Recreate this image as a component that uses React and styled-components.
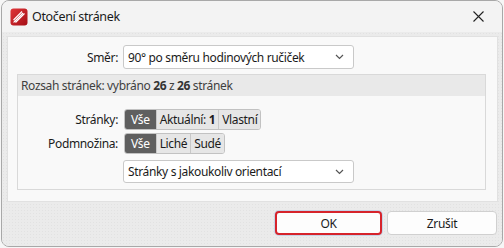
import React from "react";
import styled, { createGlobalStyle } from "styled-components";

const GlobalStyle = createGlobalStyle`
  html, body {
    margin: 0;
    padding: 0;
    background: #f6f6f6;
  }
  body {
    font-family: "Noto Sans", "Open Sans", "DejaVu Sans", sans-serif;
    font-size: 12px;
    letter-spacing: -0.35px;
    color: #1b1b1b;
  }
`;

const Chevron = () => (
  <svg width="9" height="6" viewBox="0 0 9 6">
    <path d="M1 1 L4.5 4.5 L8 1" fill="none" stroke="#555" strokeWidth="1.2" />
  </svg>
);

const AppIcon = () => (
  <svg width="18" height="18" viewBox="0 0 18 18">
    <defs>
      <linearGradient id="lg" x1="0" y1="0" x2="1" y2="1">
        <stop offset="0" stopColor="#e0363a" />
        <stop offset="1" stopColor="#a50f16" />
      </linearGradient>
    </defs>
    <rect x="0.5" y="0.5" width="17" height="17" rx="3" fill="url(#lg)" />
    <path d="M4 14 L13 5 M5.5 14.5 L14.5 5.5 M3.5 12 L12 3.5" stroke="#fff" strokeWidth="1.1" fill="none" />
    <path d="M3 15 L4.5 12.5 L5.5 13.5 Z" fill="#fff" />
  </svg>
);

const CloseIcon = () => (
  <svg width="11" height="11" viewBox="0 0 11 11">
    <path d="M0.5 0.5 L10.5 10.5 M10.5 0.5 L0.5 10.5" stroke="#222" strokeWidth="1.1" />
  </svg>
);

export default function App() {
  return (
    <>
      <GlobalStyle />
      <Window>
        <TitleBar>
          <AppIcon />
          <Title>Otočení stránek</Title>
          <CloseButton><CloseIcon /></CloseButton>
        </TitleBar>
        <Body>
          <Panel>
            <Row $label={110}>
              <Label>Směr:</Label>
              <Select>
                <span>90° po směru hodinových ručiček</span>
                <Chevron />
              </Select>
            </Row>
            <Group>
              <GroupHeader>
                Rozsah stránek: vybráno <b>26</b> z <b>26</b> stránek
              </GroupHeader>
              <GroupBody>
                <Row $label={100}>
                  <Label>Stránky:</Label>
                  <Segments>
                    <Segment $active $pad={6}>Vše</Segment>
                    <Segment>Aktuální:&nbsp;<b>1</b></Segment>
                    <Segment>Vlastní</Segment>
                  </Segments>
                </Row>
                <Row $label={100}>
                  <Label>Podmnožina:</Label>
                  <Segments>
                    <Segment $active $pad={6}>Vše</Segment>
                    <Segment>Liché</Segment>
                    <Segment>Sudé</Segment>
                  </Segments>
                </Row>
                <Row $label={100} $gapTop={3}>
                  <span />
                  <Select $height={23}>
                    <span>Stránky s jakoukoliv orientací</span>
                    <Chevron />
                  </Select>
                </Row>
              </GroupBody>
            </Group>
          </Panel>
          <Footer>
            <Button $default>OK</Button>
            <Button>Zrušit</Button>
          </Footer>
        </Body>
      </Window>
    </>
  );
}

const Window = styled.div`
  box-sizing: border-box;
  width: 502px;
  height: 247px;
  margin: 0 0 0 1px;
  border: 1px solid #a8a8a8;
  border-radius: 8px;
  overflow: hidden;
  display: flex;
  flex-direction: column;
  background: #ececec;
`;

const TitleBar = styled.div`
  height: 31px;
  display: flex;
  align-items: center;
  padding-left: 8px;
  background: #f3f3f3;
  flex-shrink: 0;
`;

const Title = styled.div`
  margin-left: 4px;
  font-size: 12.5px;
  color: #1a1a1a;
  flex: 1;
`;

const CloseButton = styled.div`
  width: 46px;
  height: 31px;
  display: flex;
  align-items: center;
  justify-content: center;
  margin-right: 1px;
`;

const Body = styled.div`
  flex: 1;
  display: flex;
  flex-direction: column;
  padding-top: 4px;
  background-color: #ebebeb;
  background-image: radial-gradient(#e2e2e2 0.6px, transparent 0.8px);
  background-size: 3px 3px;
`;

const Panel = styled.div`
  box-sizing: border-box;
  height: 166px;
  margin: 0 4px 0 5px;
  background: #f9f9f9;
  border: 1px solid #e1e1e1;
  padding: 8px 11px 0 0;
  display: flex;
  flex-direction: column;
`;

const Row = styled.div`
  display: grid;
  grid-template-columns: ${p => p.$label}px auto;
  column-gap: 5px;
  align-items: center;
  margin-top: ${p => p.$gapTop || 0}px;
`;

const Label = styled.div`
  text-align: right;
  color: #1b1b1b;
`;

const Select = styled.div`
  box-sizing: border-box;
  width: 231px;
  height: ${p => p.$height || 24}px;
  background: #fff;
  border: 1px solid #c9c9c9;
  border-radius: 3px;
  display: flex;
  align-items: center;
  justify-content: space-between;
  padding: 0 9px 0 4px;
  color: #1b1b1b;
`;

const Group = styled.div`
  margin: 5px 0 0 9px;
  border: 1px solid #d9d9d9;
  background: #f9f9f9;
  display: flex;
  flex-direction: column;
  height: 116px;
  box-sizing: border-box;
`;

const GroupHeader = styled.div`
  height: 21px;
  line-height: 21px;
  padding-left: 3px;
  background: #e9e9e9;
  color: #3f3f3f;
  b {
    color: #333;
  }
`;

const GroupBody = styled.div`
  display: flex;
  flex-direction: column;
  gap: 3px;
  padding-top: 13px;
`;

const Segments = styled.div`
  display: flex;
  justify-self: start;
  margin-left: 1px;
  border: 1px solid #c2c2c2;
  border-radius: 3px;
  overflow: hidden;
  height: 21px;
  box-sizing: border-box;
`;

const Segment = styled.div`
  display: flex;
  align-items: center;
  padding: 0 ${p => p.$pad || 3}px;
  background: ${p => (p.$active ? "#5f5f5f" : "#e6e6e6")};
  color: ${p => (p.$active ? "#fff" : "#1b1b1b")};
  border-left: 1px solid #c8c8c8;
  &:first-child {
    border-left: none;
  }
`;

const Footer = styled.div`
  flex: 1;
  display: flex;
  justify-content: flex-end;
  align-items: flex-start;
  gap: 5px;
  padding: 9px 5px 0 0;
`;

const Button = styled.div`
  box-sizing: border-box;
  width: ${p => (p.$default ? 107 : 110)}px;
  height: 24px;
  display: flex;
  align-items: center;
  justify-content: center;
  background: #fdfdfd;
  border: ${p => (p.$default ? "2px solid #d6232b" : "1px solid #d0d0d0")};
  border-radius: 4px;
  box-shadow: ${p => (p.$default ? "0 0 0 1px #c5d3e6" : "none")};
  color: #1b1b1b;
  font-size: 12px;
`;
